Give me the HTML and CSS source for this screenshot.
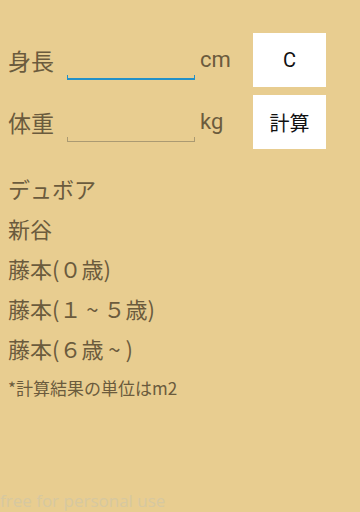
FILE: index.html
```html
<!DOCTYPE html>
<html lang="ja">
<head>
<meta charset="utf-8">
<link rel="stylesheet" href="styles.css">
</head>
<body>
<div class="page">
  <div class="row">
    <span class="label">身長</span>
    <span class="field"><span class="line focus"></span></span>
    <span class="unit">cm</span>
    <button class="btn latin">C</button>
  </div>
  <div class="row">
    <span class="label">体重</span>
    <span class="field"><span class="line"></span></span>
    <span class="unit">kg</span>
    <button class="btn">計算</button>
  </div>
  <ul class="results">
    <li>デュボア</li>
    <li>新谷</li>
    <li>藤本(０歳)</li>
    <li>藤本(１ ~ ５歳)</li>
    <li>藤本(６歳 ~ )</li>
    <li class="note">*計算結果の単位はm2</li>
  </ul>
</div>
<div class="watermark">free for personal use</div>
</body>
</html>
```
FILE: styles.css
```css
html, body {
  margin: 0;
  padding: 0;
  height: 100%;
  background: #e8cd90;
  overflow: hidden;
}
body {
  position: relative;
  font-family: "Noto Sans CJK JP", "Noto Sans", sans-serif;
  color: #6b5b3d;
}
.page {
  padding: 33px 0 0 8px;
}
.row {
  display: flex;
  align-items: center;
  height: 54px;
  margin-bottom: 8px;
}
.label {
  width: 59px;
  font-size: 23px;
  line-height: 30px;
}
.field {
  width: 128px;
  height: 54px;
  box-sizing: border-box;
  display: flex;
  flex-direction: column;
  justify-content: flex-end;
  padding-bottom: 7px;
}
.line {
  display: block;
  height: 4px;
  border: 1px solid #ab9a72;
  border-top: none;
}
.line.focus {
  height: 3px;
  border-color: #2290c8;
  border-bottom-width: 2px;
}
.unit {
  width: 53px;
  margin-left: 5px;
  font-family: Roboto, "Noto Sans", sans-serif;
  font-size: 22px;
  line-height: 30px;
}
.btn {
  width: 73px;
  height: 54px;
  border: none;
  background: #ffffff;
  color: #111111;
  font-family: "Noto Sans CJK JP", sans-serif;
  font-size: 20px;
  padding: 0;
  margin: 0;
}
.btn.latin {
  font-family: Roboto, sans-serif;
}
.results {
  list-style: none;
  margin: 19px 0 0 0;
  padding: 0;
  font-size: 22px;
  line-height: 40px;
}
.results .note {
  font-size: 17px;
}
.watermark {
  position: absolute;
  left: 0;
  bottom: 0;
  font-family: "Open Sans", sans-serif;
  font-size: 17px;
  line-height: 22px;
  color: #d6c8a0;
}
```
